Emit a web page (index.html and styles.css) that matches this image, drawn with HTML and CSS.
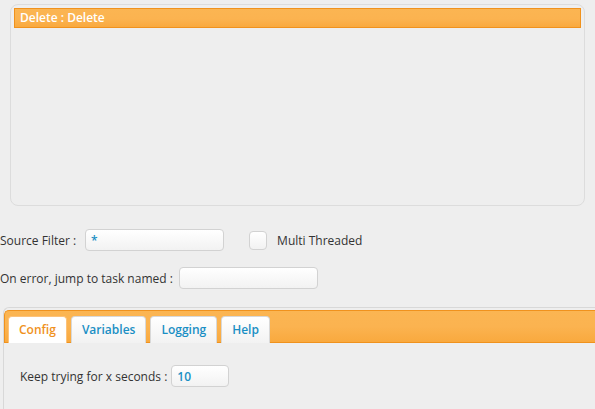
FILE: index.html
```html
<!DOCTYPE html>
<html lang="en">
<head>
    <meta charset="UTF-8">
    <title>Delete task</title>
    <link rel="stylesheet" href="styles.css">
</head>
<body>

    <div class="task-list">
        <div class="task-item">Delete : Delete</div>
    </div>

    <div class="form-row">
        <label class="field-label wide">Source Filter :</label>
        <input class="text-input source-input" type="text" value="*">
        <span class="check-box"></span>
        <span class="check-label">Multi Threaded</span>
    </div>

    <div class="form-row">
        <label class="field-label">On error, jump to task named :</label>
        <input class="text-input" type="text" value="">
    </div>

    <div class="tabs">
        <ul class="tab-nav">
            <li class="tab active">Config</li>
            <li class="tab">Variables</li>
            <li class="tab">Logging</li>
            <li class="tab">Help</li>
        </ul>
        <div class="tab-panel">
            <label class="field-label narrow">Keep trying for x seconds :</label>
            <input class="text-input seconds-input" type="text" value="10">
        </div>
    </div>

</body>
</html>
```

FILE: styles.css
```css
* {
    margin: 0;
    padding: 0;
    box-sizing: border-box;
}
html, body {
    background: #eeeeee;
    font-family: 'Open Sans', sans-serif;
    font-size: 12px;
    color: #333;
    overflow: hidden;
}
body {
    padding-top: 4px;
}
.task-list {
    margin: 0 10px 0 10px;
    width: 575px;
    height: 202px;
    border: 1px solid #dcdcdc;
    border-radius: 8px;
    padding: 3px;
}
.task-item {
    height: 20px;
    line-height: 18px;
    padding-left: 5px;
    color: #fff;
    font-weight: 600;
    border: 1px solid #f0921d;
    background: linear-gradient(to bottom, #fbb552 0%, #fbb350 55%, #f9a93e 100%);
}
.form-row {
    display: flex;
    align-items: center;
    height: 22px;
}
.task-list + .form-row {
    margin-top: 23px;
}
.form-row + .form-row {
    margin-top: 16px;
}
.field-label {
    margin-right: 6px;
}
.field-label.wide {
    margin-right: 9px;
}
.field-label.narrow {
    margin-right: 4px;
}
.text-input {
    height: 22px;
    width: 139px;
    border: 1px solid #d2d2d2;
    border-radius: 4px;
    background: linear-gradient(to bottom, #ffffff, #f2f2f2);
    font-family: 'Open Sans', sans-serif;
    font-size: 12px;
    font-weight: 600;
    color: #1a8fc4;
    padding: 0 5px;
    outline: none;
}
.check-box {
    width: 18px;
    height: 19px;
    margin-left: 25px;
    border: 1px solid #d2d2d2;
    border-radius: 4px;
    background: linear-gradient(to bottom, #ffffff, #f2f2f2);
}
.check-label {
    margin-left: 10px;
}
.tabs {
    margin-top: 18px;
    margin-left: 3px;
    border-top: 1px solid #d8d8d8;
    border-left: 1px solid #d8d8d8;
    border-radius: 6px 0 0 0;
    padding-top: 2px;
}
.tab-nav {
    list-style: none;
    display: flex;
    gap: 4px;
    height: 33px;
    padding: 5px 0 0 3px;
    border: 1px solid #f0921d;
    border-right: none;
    border-radius: 5px 0 0 0;
    background: linear-gradient(to bottom, #fbb552 0%, #fbb350 50%, #f9a93e 100%);
}
.tab {
    height: 27px;
    line-height: 26px;
    padding: 0 10px;
    border: 1px solid #d8d8d8;
    border-bottom: none;
    border-radius: 4px 4px 0 0;
    background: linear-gradient(to bottom, #ffffff, #f2f2f2);
    color: #1a8fc4;
    font-weight: 600;
}
.tab.active {
    background: #fff;
    color: #f0921d;
    border-color: #fcc27a;
}
.tab-panel {
    display: flex;
    align-items: center;
    padding: 22px 0 40px 16px;
}
.seconds-input {
    width: 58px;
}
```
